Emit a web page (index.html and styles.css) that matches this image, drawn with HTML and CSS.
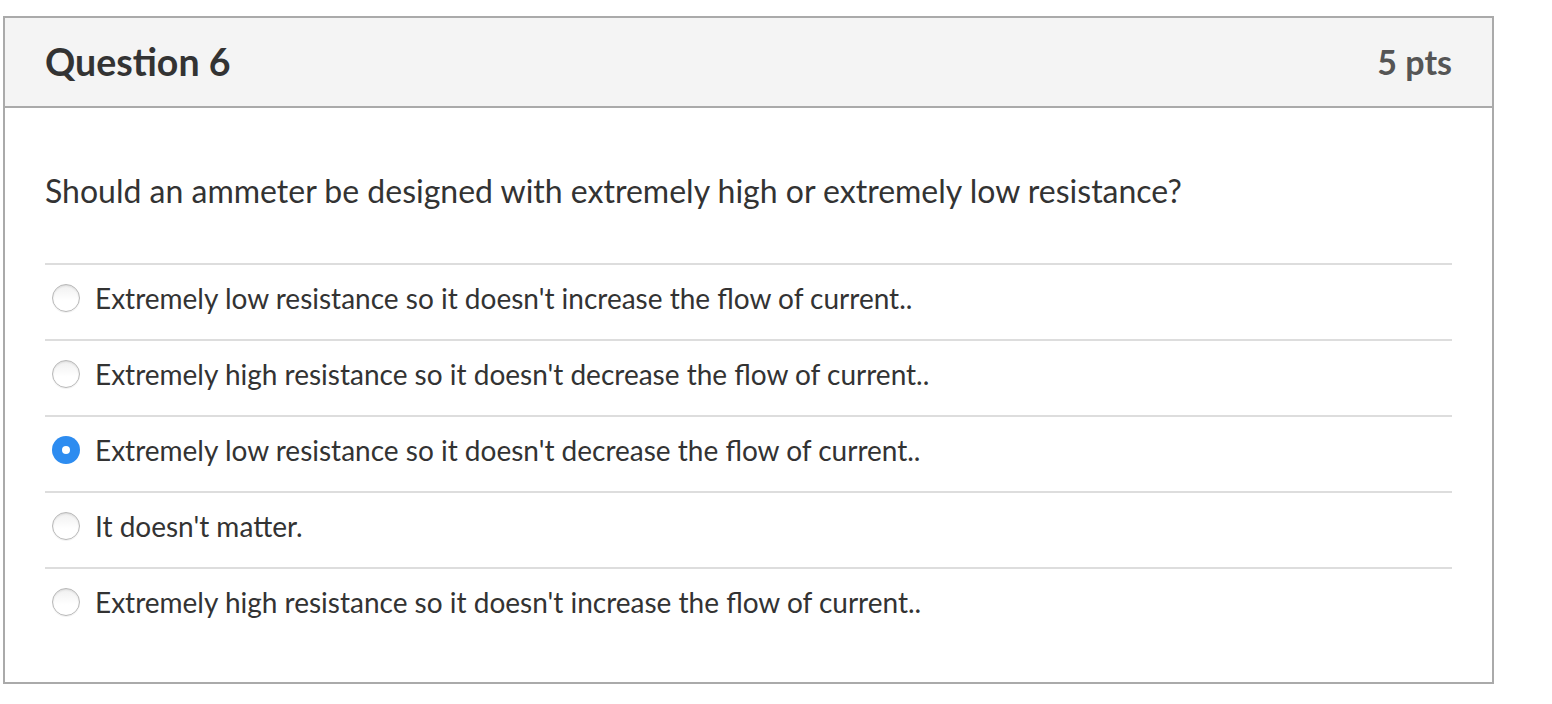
FILE: index.html
```html
<!DOCTYPE html>
<html>
<head>
<meta charset="utf-8">
<link rel="stylesheet" href="styles.css">
</head>
<body>
<div class="page">
  <div class="question">
    <div class="q-header">
      <h2 class="q-title">Question 6</h2>
      <span class="q-pts">5 pts</span>
    </div>
    <div class="q-body">
      <p class="q-text">Should an ammeter be designed with extremely high or extremely low resistance?</p>
      <div class="answers">
        <label class="answer"><span class="radio"></span><span class="answer-text">Extremely low resistance so it doesn't increase the flow of current..</span></label>
        <label class="answer"><span class="radio"></span><span class="answer-text">Extremely high resistance so it doesn't decrease the flow of current..</span></label>
        <label class="answer"><span class="radio checked"></span><span class="answer-text">Extremely low resistance so it doesn't decrease the flow of current..</span></label>
        <label class="answer"><span class="radio"></span><span class="answer-text">It doesn't matter.</span></label>
        <label class="answer"><span class="radio"></span><span class="answer-text">Extremely high resistance so it doesn't increase the flow of current..</span></label>
      </div>
    </div>
  </div>
</div>
</body>
</html>
```

FILE: styles.css
```css
* { box-sizing: border-box; }
html, body { margin: 0; padding: 0; background: #fff; }
body { font-family: Lato, "Open Sans", "Liberation Sans", sans-serif; color: #2d3b45; }
.page { padding: 16px 0 0 3px; }
.question {
  width: 1491px;
  height: 668px;
  border: 2px solid #aaaaaa;
  display: flex;
  flex-direction: column;
}
.q-header {
  height: 90px;
  background: #f4f4f4;
  border-bottom: 2px solid #aaaaaa;
  display: flex;
  align-items: center;
  justify-content: space-between;
  padding: 0 40px 0 40px;
}
.q-title {
  margin: 0;
  font-size: 37.5px;
  font-weight: 700;
  line-height: 44px;
  color: #333333;
}
.q-pts {
  font-size: 34px;
  font-weight: 700;
  line-height: 44px;
  color: #555555;
}
.q-body { padding: 0 40px 0 40px; }
.q-text {
  margin: 0;
  padding-top: 64px;
  height: 155px;
  font-size: 32px;
  line-height: 38px;
  color: #333333;
}
.answers { display: flex; flex-direction: column; }
.answer {
  height: 76px;
  border-top: 2px solid #dddddd;
  display: flex;
  align-items: center;
  padding-left: 7px;
  padding-bottom: 8px;
  gap: 15px;
}
.radio {
  width: 28px;
  height: 28px;
  border-radius: 50%;
  border: 1px solid #b8b8b8;
  background: linear-gradient(#f0f0f0, #ffffff 60%);
  box-shadow: inset 0 1px 2px rgba(0,0,0,0.1), 0 1px 0 rgba(0,0,0,0.05);
  flex: none;
  display: flex;
  align-items: center;
  justify-content: center;
}
.radio.checked {
  border: none;
  background: #2d8cf0;
  box-shadow: none;
}
.radio.checked::after {
  content: "";
  width: 8px;
  height: 8px;
  border-radius: 50%;
  background: #fff;
}
.answer-text {
  font-size: 28px;
  line-height: 34px;
  color: #333333;
}
```
